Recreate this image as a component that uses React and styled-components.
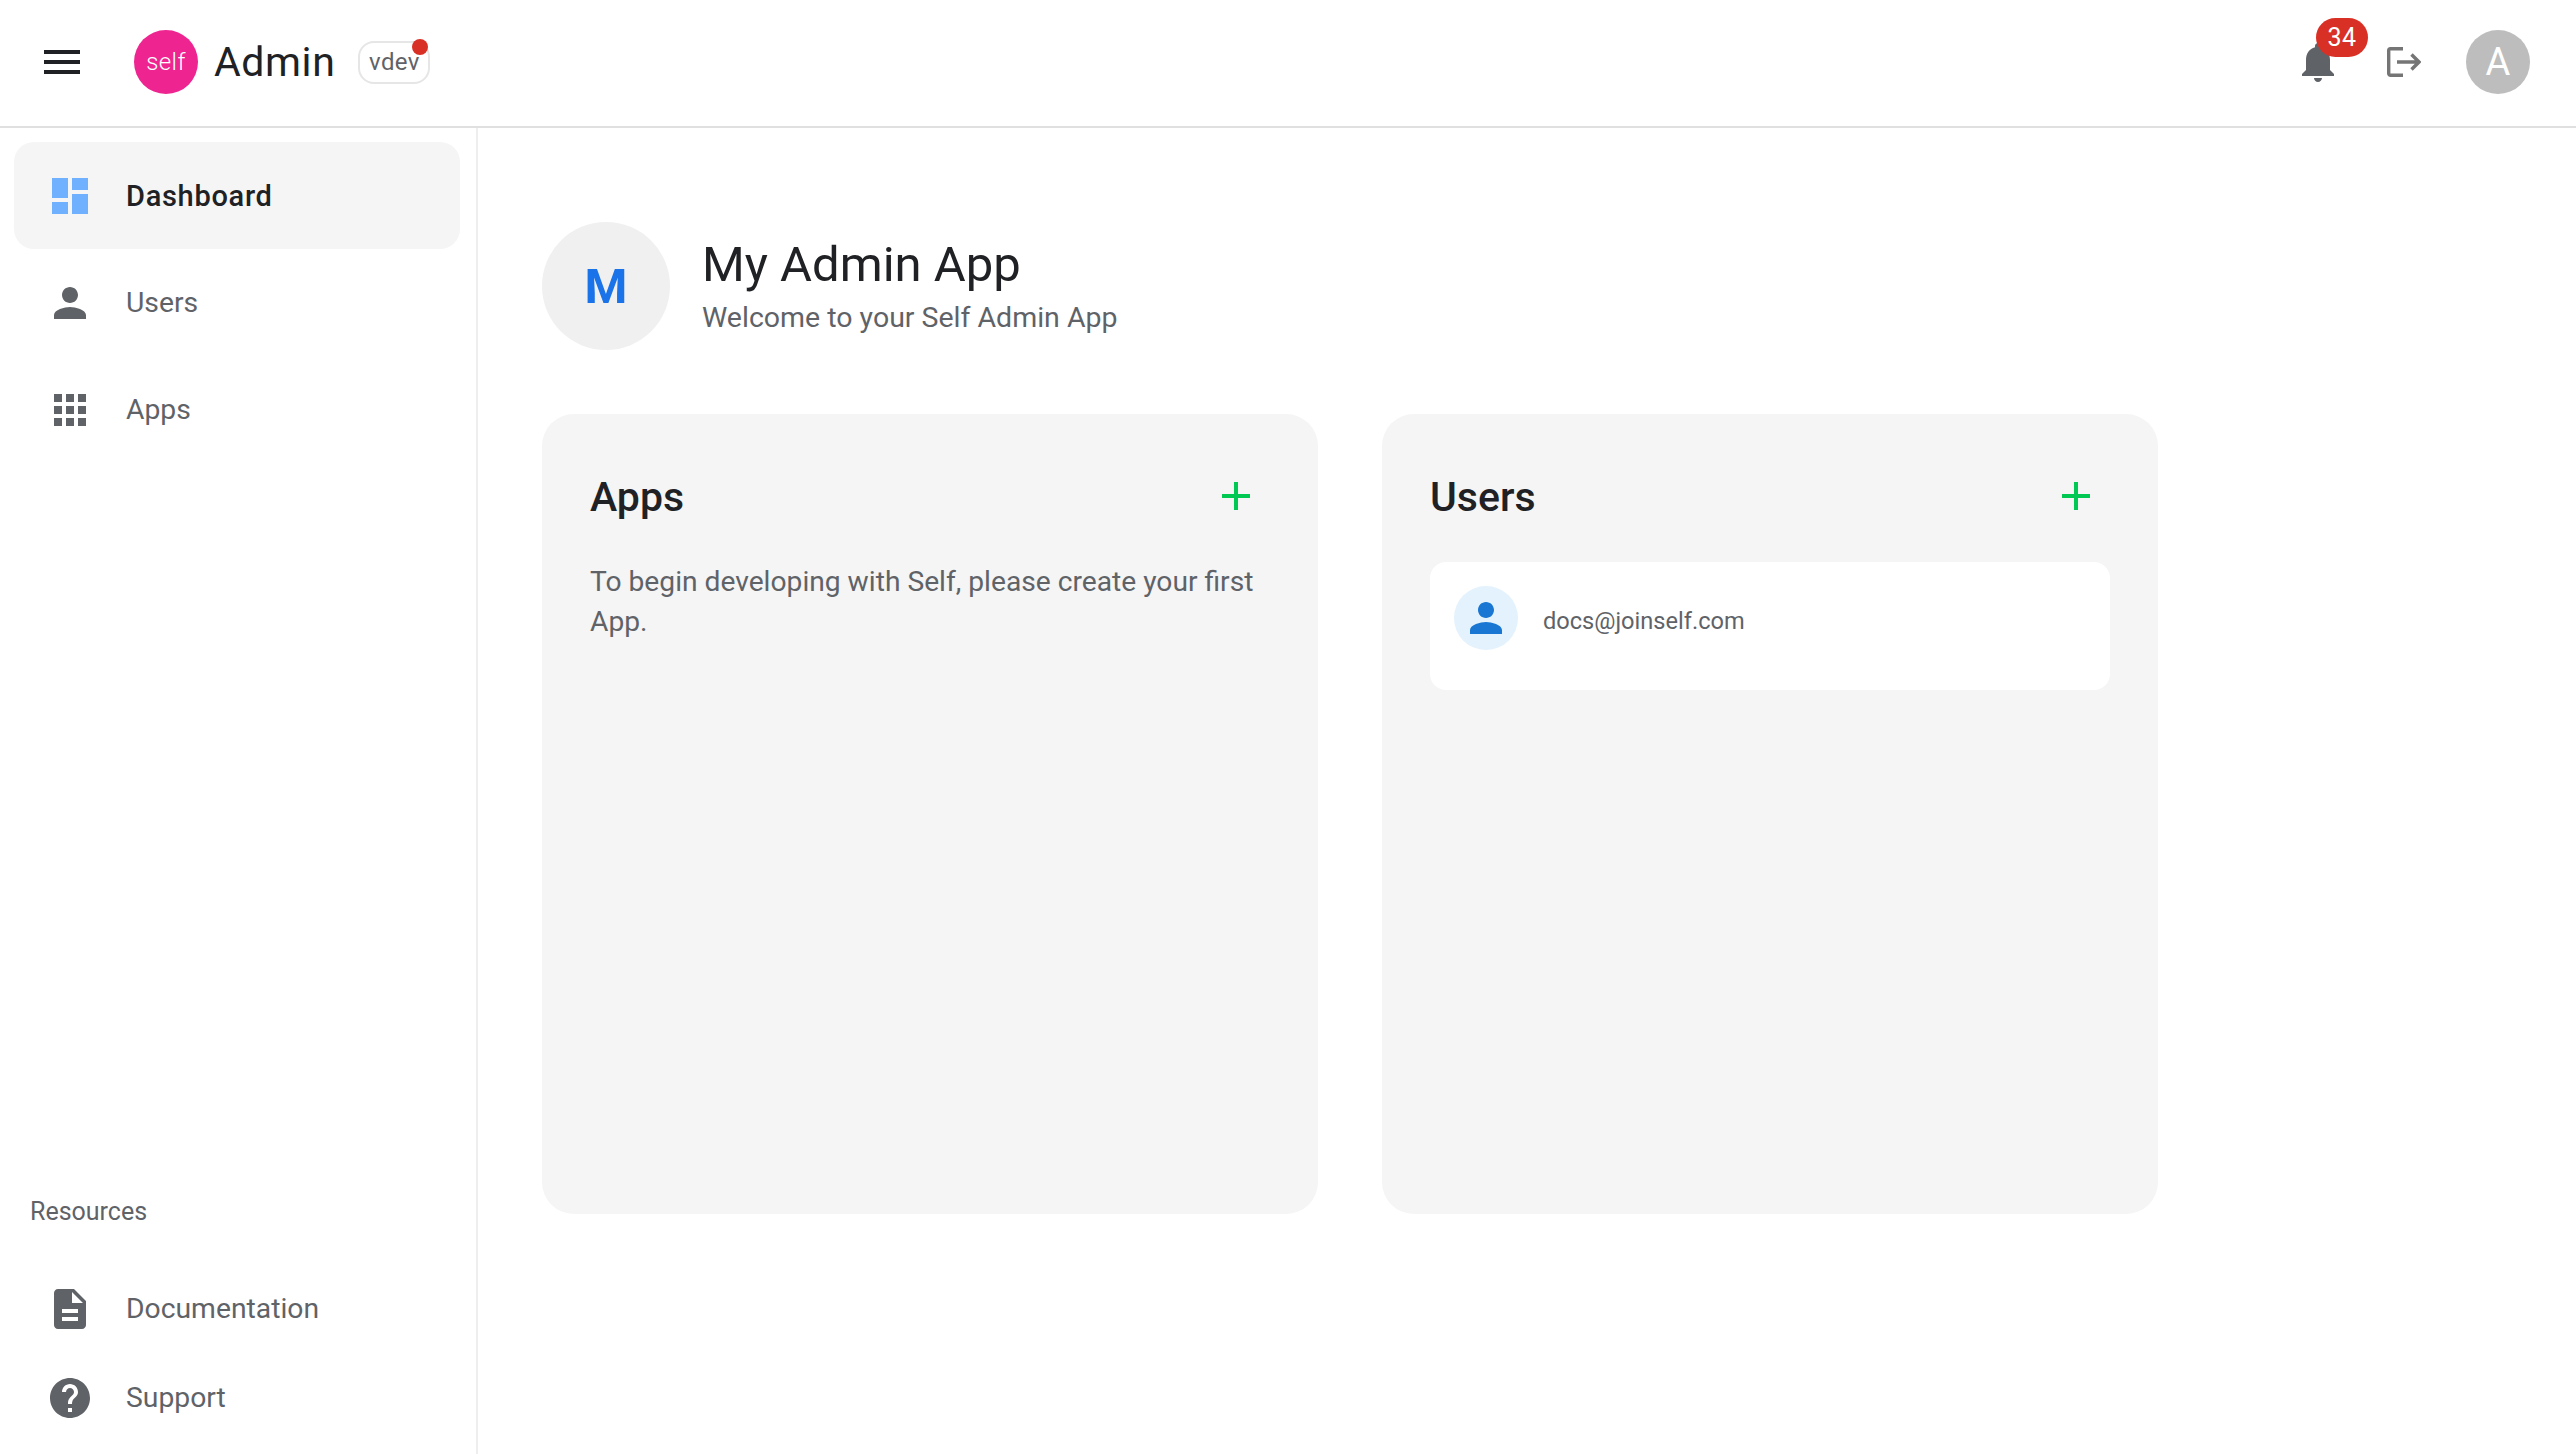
import React from "react";
import styled, { createGlobalStyle } from "styled-components";

const GlobalStyle = createGlobalStyle`
    html, body {
        margin: 0;
        padding: 0;
        background: #ffffff;
        font-family: "Roboto", "Liberation Sans", sans-serif;
    }
    * {
        box-sizing: border-box;
    }
`;

const Page = styled.div`
    width: 2576px;
    height: 1454px;
    display: flex;
    flex-direction: column;
    overflow: hidden;
`;

const Header = styled.header`
    height: 128px;
    flex-shrink: 0;
    display: flex;
    align-items: center;
    padding: 0 46px 2px 44px;
    border-bottom: 2px solid #e0e0e0;
`;

const MenuButton = styled.div`
    width: 36px;
    display: flex;
    flex-direction: column;
    gap: 6px;
    margin-right: 54px;

    span {
        height: 4px;
        background: #202124;
    }
`;

const Logo = styled.div`
    width: 64px;
    height: 64px;
    border-radius: 50%;
    background: #ee2590;
    color: #ffffff;
    display: flex;
    align-items: center;
    justify-content: center;
    font-size: 24px;
    font-weight: 300;
    letter-spacing: 0.4px;
    margin-right: 16px;
`;

const BrandName = styled.div`
    font-size: 41px;
    font-weight: 400;
    letter-spacing: 0.6px;
    color: #202124;
    margin-right: 23px;
`;

const VersionBadge = styled.div`
    position: relative;
    width: 72px;
    height: 43px;
    border: 2px solid #e6e6e6;
    border-radius: 16px;
    display: flex;
    align-items: center;
    justify-content: center;
    font-size: 24px;
    letter-spacing: 0.4px;
    color: #5f6368;

    &::after {
        content: "";
        position: absolute;
        top: -4px;
        right: 0;
        width: 16px;
        height: 16px;
        border-radius: 50%;
        background: #d93025;
    }
`;

const HeaderRight = styled.div`
    margin-left: auto;
    display: flex;
    align-items: center;
`;

const BellWrap = styled.div`
    position: relative;
    width: 48px;
    height: 48px;
    margin-right: 45px;
`;

const CountBadge = styled.div`
    position: absolute;
    top: -20px;
    left: 22px;
    width: 52px;
    height: 39px;
    border-radius: 20px;
    background: #d93025;
    color: #ffffff;
    font-size: 25px;
    font-weight: 400;
    letter-spacing: 0.5px;
    display: flex;
    align-items: center;
    justify-content: center;
`;

const LogoutIcon = styled.svg`
    width: 34px;
    height: 30px;
    margin-right: 45px;
`;

const UserAvatar = styled.div`
    width: 64px;
    height: 64px;
    border-radius: 50%;
    background: #bdbdbd;
    color: #ffffff;
    font-size: 38px;
    display: flex;
    align-items: center;
    justify-content: center;
`;

const Body = styled.div`
    flex: 1;
    display: flex;
    min-height: 0;
`;

const Sidebar = styled.aside`
    width: 478px;
    flex-shrink: 0;
    border-right: 2px solid #eeeeee;
    padding: 14px 16px 12px 14px;
    display: flex;
    flex-direction: column;
    justify-content: space-between;
`;

const NavItem = styled.div`
    height: ${props => props.$height || 107}px;
    display: flex;
    align-items: center;
    gap: 32px;
    padding-left: 32px;
    border-radius: 20px;
    font-size: ${props => (props.$active ? 29 : 28.3)}px;
    font-weight: ${props => (props.$active ? 500 : 400)};
    letter-spacing: ${props => (props.$active ? 0.7 : 0)}px;
    color: ${props => (props.$active ? "#202124" : "#5f6368")};
    background: ${props => (props.$active ? "#f5f5f5" : "transparent")};
`;

const NavIcon = styled.svg`
    width: 48px;
    height: 48px;
    flex-shrink: 0;
    fill: ${props => props.$color || "#5f6368"};
`;

const ResourcesTitle = styled.div`
    font-size: 25px;
    font-weight: 400;
    color: #5f6368;
    padding-left: 16px;
    margin-bottom: 38px;
`;

const Main = styled.main`
    flex: 1;
    padding: 94px 0 0 64px;
`;

const AppHeader = styled.div`
    display: flex;
    align-items: center;
    gap: 32px;
`;

const AppAvatar = styled.div`
    width: 128px;
    height: 128px;
    border-radius: 50%;
    background: #f0f0f0;
    color: #1a73e8;
    font-size: 49px;
    font-weight: 700;
    display: flex;
    align-items: center;
    justify-content: center;
`;

const AppTitle = styled.h1`
    margin: 0;
    font-size: 49px;
    font-weight: 400;
    line-height: 60px;
    color: #202124;
`;

const AppSubtitle = styled.div`
    font-size: 28.5px;
    line-height: 40px;
    margin-top: 3px;
    color: #5f6368;
`;

const CardGrid = styled.div`
    margin-top: 64px;
    display: grid;
    grid-template-columns: 776px 776px;
    gap: 64px;
`;

const Card = styled.section`
    height: 800px;
    padding: 48px;
    background: #f5f5f5;
    border-radius: 32px;
`;

const CardHead = styled.div`
    height: 70px;
    margin-bottom: 30px;
    display: flex;
    align-items: center;
    justify-content: space-between;
    padding-right: 20px;
`;

const CardTitle = styled.h2`
    margin: 0;
    font-size: 41px;
    font-weight: 500;
    color: #202124;
`;

const PlusIcon = styled.svg`
    width: 28px;
    height: 28px;
    margin-top: -2px;
`;

const CardText = styled.p`
    margin: 0;
    font-size: 28.2px;
    line-height: 40px;
    color: #5f6368;
`;

const UserRow = styled.div`
    height: 128px;
    padding: 24px;
    background: #ffffff;
    border-radius: 16px;
    display: flex;
    align-items: flex-start;
    gap: 25px;
`;

const UserIconCircle = styled.div`
    width: 64px;
    height: 64px;
    border-radius: 50%;
    background: #e3f2fd;
    display: flex;
    align-items: center;
    justify-content: center;
`;

const UserEmail = styled.div`
    font-size: 23.6px;
    line-height: 64px;
    margin-top: 3px;
    color: #5f6368;
`;

const icons = {
    dashboard: "M3 13h8V3H3v10zm0 8h8v-6H3v6zm10 0h8V11h-8v10zm0-18v6h8V3h-8z",
    person: "M12 12c2.21 0 4-1.79 4-4s-1.79-4-4-4-4 1.79-4 4 1.79 4 4 4zm0 2c-2.67 0-8 1.34-8 4v2h16v-2c0-2.66-5.33-4-8-4z",
    apps: "M4 8h4V4H4v4zm6 12h4v-4h-4v4zm-6 0h4v-4H4v4zm0-6h4v-4H4v4zm6 0h4v-4h-4v4zm6-10v4h4V4h-4zm-6 4h4V4h-4v4zm6 6h4v-4h-4v4zm0 6h4v-4h-4v4z",
    doc: "M14 2H6c-1.1 0-1.99.9-1.99 2L4 20c0 1.1.89 2 1.99 2H18c1.1 0 2-.9 2-2V8l-6-6zm2 16H8v-2h8v2zm0-4H8v-2h8v2zm-3-5V3.5L18.5 9H13z",
    help: "M12 2C6.48 2 2 6.48 2 12s4.48 10 10 10 10-4.48 10-10S17.52 2 12 2zm1 17h-2v-2h2v2zm2.07-7.75l-.9.92C13.45 12.9 13 13.5 13 15h-2v-.5c0-1.1.45-2.1 1.17-2.83l1.24-1.26c.37-.36.59-.86.59-1.41 0-1.1-.9-2-2-2s-2 .9-2 2H8c0-2.21 1.79-4 4-4s4 1.79 4 4c0 .88-.36 1.68-.93 2.25z",
    bell: "M12 22c1.1 0 2-.9 2-2h-4c0 1.1.89 2 2 2zm6-6v-5c0-3.07-1.64-5.64-4.5-6.32V4c0-.83-.67-1.5-1.5-1.5s-1.5.67-1.5 1.5v.68C7.63 5.36 6 7.92 6 11v5l-2 2v1h16v-1l-2-2z",
};

const Icon = ({ name, color }) => (
    <NavIcon viewBox="0 0 24 24" $color={color}>
        <path d={icons[name]} />
    </NavIcon>
);

const Plus = () => (
    <PlusIcon viewBox="0 0 28 28">
        <path d="M14 0v28M0 14h28" stroke="#00c853" strokeWidth="4" fill="none" />
    </PlusIcon>
);

const topNav = [
    { label: "Dashboard", icon: "dashboard", active: true },
    { label: "Users", icon: "person" },
    { label: "Apps", icon: "apps" },
];

const App = () => {
    return (
        <Page>
            <GlobalStyle />
            <Header>
                <MenuButton>
                    <span />
                    <span />
                    <span />
                </MenuButton>
                <Logo>self</Logo>
                <BrandName>Admin</BrandName>
                <VersionBadge>vdev</VersionBadge>
                <HeaderRight>
                    <BellWrap>
                        <Icon name="bell" />
                        <CountBadge>34</CountBadge>
                    </BellWrap>
                    <LogoutIcon viewBox="0 0 34 30" fill="none" stroke="#757575" strokeWidth="3.4">
                        <path d="M16 1.7H3.500a1.800 1.800 0 0 0-1.800 1.800v23a1.800 1.800 0 0 0 1.800 1.800H16" />
                        <path d="M10 15h22M24.500 7.500l7.500 7.500-7.500 7.500" />
                    </LogoutIcon>
                    <UserAvatar>A</UserAvatar>
                </HeaderRight>
            </Header>
            <Body>
                <Sidebar>
                    <div>
                        {topNav.map((item) => (
                            <NavItem key={item.label} $active={item.active}>
                                <Icon name={item.icon} color={item.active ? "#6fb1ff" : undefined} />
                                {item.label}
                            </NavItem>
                        ))}
                    </div>
                    <div>
                        <ResourcesTitle>Resources</ResourcesTitle>
                        <NavItem $height={89}>
                            <Icon name="doc" />
                            Documentation
                        </NavItem>
                        <NavItem $height={89}>
                            <Icon name="help" />
                            Support
                        </NavItem>
                    </div>
                </Sidebar>
                <Main>
                    <AppHeader>
                        <AppAvatar>M</AppAvatar>
                        <div>
                            <AppTitle>My Admin App</AppTitle>
                            <AppSubtitle>Welcome to your Self Admin App</AppSubtitle>
                        </div>
                    </AppHeader>
                    <CardGrid>
                        <Card>
                            <CardHead>
                                <CardTitle>Apps</CardTitle>
                                <Plus />
                            </CardHead>
                            <CardText>To begin developing with Self, please create your first App.</CardText>
                        </Card>
                        <Card>
                            <CardHead>
                                <CardTitle>Users</CardTitle>
                                <Plus />
                            </CardHead>
                            <UserRow>
                                <UserIconCircle>
                                    <Icon name="person" color="#1976d2" />
                                </UserIconCircle>
                                <UserEmail>docs@joinself.com</UserEmail>
                            </UserRow>
                        </Card>
                    </CardGrid>
                </Main>
            </Body>
        </Page>
    );
};

export default App;
